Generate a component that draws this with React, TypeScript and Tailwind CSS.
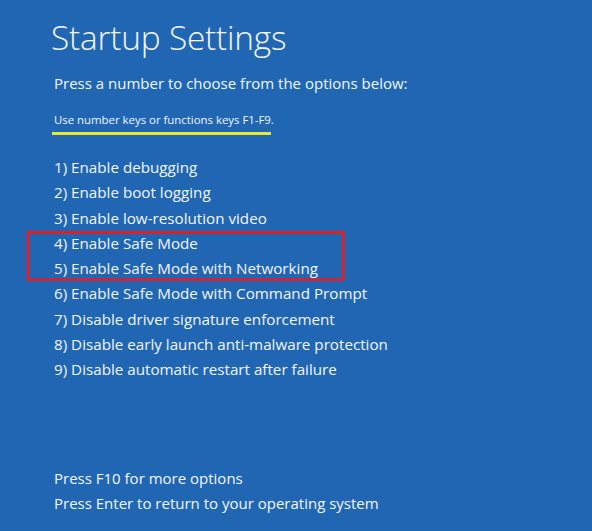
const items = [
  "1) Enable debugging",
  "2) Enable boot logging",
  "3) Enable low-resolution video",
  "4) Enable Safe Mode",
  "5) Enable Safe Mode with Networking",
  "6) Enable Safe Mode with Command Prompt",
  "7) Disable driver signature enforcement",
  "8) Disable early launch anti-malware protection",
  "9) Disable automatic restart after failure",
];

export default function App() {
  return (
    <div
      className="w-[592px] h-[531px] bg-[#2166b3] text-[#f2f6fb] overflow-hidden flex flex-col pl-[54px]"
      style={{ fontFamily: '"Open Sans", "Noto Sans", sans-serif' }}
    >
      <h1 className="-ml-[3px] mt-[14px] text-[33.4px] font-light leading-[46px] tracking-[-0.2px]">
        Startup Settings
      </h1>
      <p className="mt-[12px] text-[15px] leading-[22px]">Press a number to choose from the options below:</p>
      <div className="mt-[17px] self-start">
        <p className="text-[11.4px] leading-[18px]">Use number keys or functions keys F1-F9.</p>
        <div className="-ml-[2px] mt-[3px] h-[3px] w-[219px] bg-[#eaea2a]" />
      </div>

      <ul className="mt-[20px] text-[15.2px] leading-[25.3px]">
        {items.slice(0, 3).map((t) => (
          <li key={t}>{t}</li>
        ))}
        <li className="relative">
          <div>{items[3]}</div>
          <div>{items[4]}</div>
          <span className="absolute inset-y-0 -left-[27px] w-[318px] border-[3px] border-[#d52231]" />
        </li>
        {items.slice(5).map((t) => (
          <li key={t}>{t}</li>
        ))}
      </ul>

      <div className="mt-auto mb-[15px] text-[15px] leading-[25px]">
        <p>Press F10 for more options</p>
        <p>Press Enter to return to your operating system</p>
      </div>
    </div>
  );
}
